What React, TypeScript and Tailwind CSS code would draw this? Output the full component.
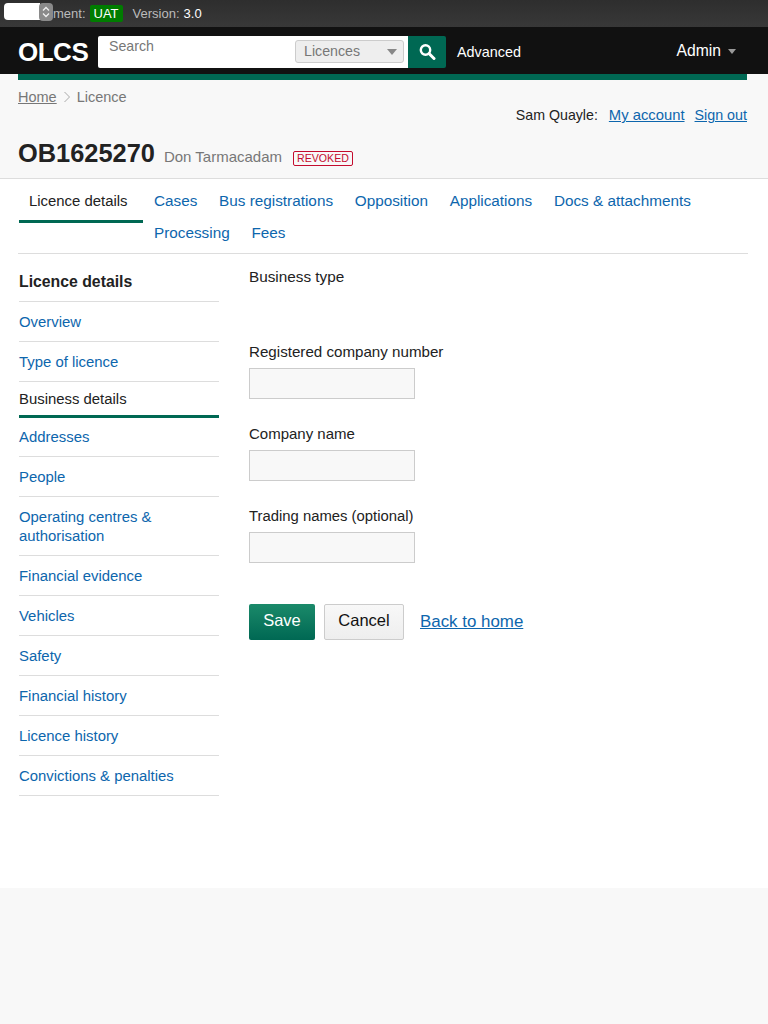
import React from "react";

const link = "text-[#0d66ad]";
const side: { t: string }[] = [{ t: "Overview" }, { t: "Type of licence" }];
const sideAfter = [
  { t: "People" },
  { t: "Operating centres & authorisation" },
  { t: "Financial evidence" },
  { t: "Vehicles" },
  { t: "Safety" },
  { t: "Financial history" },
  { t: "Licence history" },
  { t: "Convictions & penalties" },
];

function Field({ label, size }: { label: string; size: string }) {
  return (
    <div className="mb-[24px]">
      <div className={`h-[27px] leading-[22px] text-[#222] ${size}`}>{label}</div>
      <div className="w-[166px] h-[31px] bg-[#f8f8f8] border border-[#cccccc]" />
    </div>
  );
}

export default function App() {
  return (
    <div className="min-h-[1024px] bg-[#f8f8f8] text-[15px] font-['Liberation_Sans',Arial,sans-serif] text-[#222]">
      <div className="relative h-[27px] bg-gradient-to-b from-[#2e2e2e] to-[#383838] flex items-center pl-[53px] text-[13px] text-[#bbbbbb]">
        <span>ment:</span>
        <span className="ml-[4px] h-[17px] leading-[17px] px-[4px] bg-[#007c00] text-white rounded-[2px]">UAT</span>
        <span className="ml-[10px]">Version:</span>
        <span className="ml-[4px] text-white">3.0</span>
        <div className="absolute left-[4px] top-[3px] w-[36px] h-[17px] bg-white rounded-l-[4px]" />
        <div className="absolute left-[39px] top-[3px] w-[14px] h-[18px] bg-[#8a8a8a] rounded-[4px] flex items-center justify-center">
          <svg width="8" height="12" viewBox="0 0 8 12" fill="none" stroke="#f0f0f0" strokeWidth="1.3">
            <path d="M1 4.5 4 1.5 7 4.5M1 7.5l3 3 3-3" />
          </svg>
        </div>
      </div>
      <div className="h-[47px] bg-[#111111] flex pl-[18px] relative">
        <div className="w-[80px] pt-[8px] text-[26px] leading-[34px] font-bold text-white tracking-[-0.5px]">OLCS</div>
        <div className="mt-[9px] h-[32px] w-[310px] bg-white rounded-l-[2px] flex justify-between">
          <span className="pl-[11px] text-[14.2px] leading-[20px] text-[#777]">Search</span>
          <div className="mt-[4px] mr-[4px] w-[109px] h-[23px] bg-[#eeeeee] border border-[#cccccc] rounded-[3px] flex items-center justify-between pl-[8px] pr-[6px] text-[14.2px] text-[#777]">
            <span>Licences</span>
            <span className="w-0 h-0 border-x-[5px] border-x-transparent border-t-[6px] border-t-[#888]" />
          </div>
        </div>
        <div className="mt-[9px] h-[32px] w-[38px] bg-[#006853] rounded-r-[2px] flex items-center justify-center">
          <svg width="18" height="18" viewBox="0 0 18 18" fill="none" stroke="white">
            <circle cx="7.5" cy="7" r="4.7" strokeWidth="2.4" />
            <path d="M11 10.5l5 5" strokeWidth="3" strokeLinecap="round" />
          </svg>
        </div>
        <div className="ml-[11px] pt-[15px] text-[14.4px] leading-[20px] text-white">Advanced</div>
        <div className="ml-auto mr-[32px] pt-[14px] flex items-start text-white text-[15.7px] leading-[20px]">
          <span>Admin</span>
          <span className="ml-[7px] mt-[8px] w-0 h-0 border-x-[4.5px] border-x-transparent border-t-[5px] border-t-[#999]" />
        </div>
      </div>
      <div className="mx-[18px] w-[729px] h-[6px] bg-[#006853]" />

      <div className="h-[99px] border-b border-[#dddddd] px-[18px] relative">
        <div className="pt-[7px] flex items-center text-[14.5px] leading-[20px] text-[#777]">
          <span className="underline">Home</span>
          <svg className="ml-[6px] mr-[5px]" width="9" height="12" viewBox="0 0 9 12" fill="none" stroke="#aaaaaa">
            <path d="M1.5 1l5 5-5 5" />
          </svg>
          <span>Licence</span>
        </div>
        <div className="absolute right-[21px] top-[26px] flex leading-[18px]">
          <span className="text-[#222] text-[14.2px]">Sam Quayle:</span>
          <span className={`ml-[11px] underline text-[14.8px] ${link}`}>My account</span>
          <span className={`ml-[10px] underline text-[14.3px] ${link}`}>Sign out</span>
        </div>
        <div className="mt-[28px] flex items-baseline">
          <span className="text-[25.4px] leading-[36px] font-bold text-[#222]">OB1625270</span>
          <span className="ml-[9px] text-[#777] text-[15px]">Don Tarmacadam</span>
          <span className="ml-[11px] h-[15px] px-[3px] border border-[#c40c2e] rounded-[2px] text-[10.6px] leading-[13px] text-[#c40c2e] self-center mt-[11px]">REVOKED</span>
        </div>
      </div>

      <div className="h-[709px] bg-white px-[18px]">
        <div className="flex flex-wrap w-[730px] h-[75px] border-b border-[#dddddd] pl-[1px] pt-[6px] content-start">
          <div className="w-[124px] h-[38px] pl-[10px] leading-[32px] text-[14.9px] border-b-[3px] border-[#006853] mr-[11px] text-[#222]">Licence details</div>
          <div className="flex flex-wrap w-[590px] gap-x-[21.75px] text-[15.3px]">
            {["Cases", "Bus registrations", "Opposition", "Applications", "Docs & attachments", "Processing", "Fees"].map((t) => (
              <span key={t} className={`leading-[32px] ${link}`}>{t}</span>
            ))}
          </div>
        </div>

        <div className="flex pt-[8px] text-[14.9px]">
          <div className="w-[200px] ml-[1px]">
            <div className="h-[40px] leading-[40px] font-bold text-[15.8px] border-b border-[#dddddd] text-[#222]">Licence details</div>
            {side.map((s) => (
              <div key={s.t} className={`h-[40px] pt-[1px] leading-[39px] border-b border-[#dddddd] ${link}`}>{s.t}</div>
            ))}
            <div className="h-[36px] leading-[34px] border-b-[3px] border-[#006853] text-[#222]">Business details</div>
            <div className={`pt-[10px] pb-[9px] leading-[19px] border-b border-[#dddddd] ${link}`}>Addresses</div>
            {sideAfter.map((s) => (
              <div key={s.t} className={`pt-[11px] pb-[9px] leading-[19px] border-b border-[#dddddd] ${link}`}>{s.t}</div>
            ))}
          </div>
          <div className="ml-[30px] pt-[3px] flex-1">
            <div className="h-[76px] leading-[20px] pt-[2px] text-[15.3px] text-[#222]">Business type</div>
            <Field label="Registered company number" size="text-[15.15px]" />
            <Field label="Company name" size="text-[15px]" />
            <Field label="Trading names (optional)" size="text-[14.85px]" />
            <div className="mt-[41px] flex items-center">
              <div className="w-[66px] h-[36px] bg-gradient-to-b from-[#1a8a6a] to-[#006853] rounded-[2px] text-white text-[16.5px] leading-[33px] text-center">Save</div>
              <div className="ml-[9px] w-[80px] h-[36px] bg-gradient-to-b from-[#f8f8f8] to-[#eeeeee] border border-[#cccccc] rounded-[2px] text-[#111] text-[16.5px] leading-[30px] text-center">Cancel</div>
              <span className={`ml-[16px] text-[16.9px] underline ${link}`}>Back to home</span>
            </div>
          </div>
        </div>
      </div>
    </div>
  );
}
